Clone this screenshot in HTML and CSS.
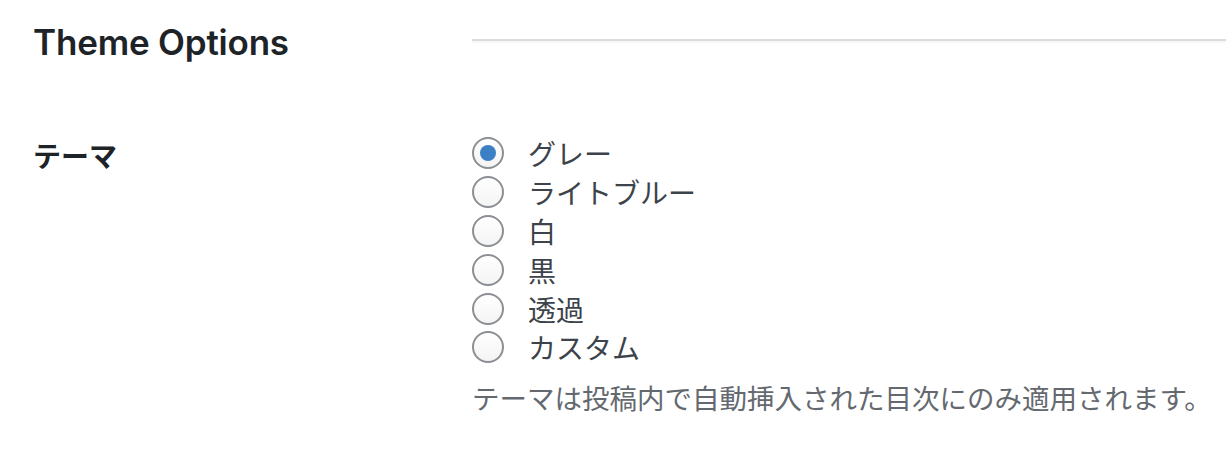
FILE: index.html
```html
<!DOCTYPE html>
<html lang="ja">
<head>
    <meta charset="UTF-8">
    <meta name="viewport" content="width=device-width, initial-scale=1.0">
    <title>Theme Options</title>
    <link rel="stylesheet" href="styles.css">
</head>
<body>
    <div class="wrap">
        <div class="section-head">
            <h2 class="title">Theme Options</h2>
            <hr class="divider">
        </div>
        <div class="form-row">
            <div class="row-label">テーマ</div>
            <div class="row-field">
                <fieldset class="choices">
                    <label class="choice"><input type="radio" name="theme" value="grey" checked><span>グレー</span></label>
                    <label class="choice"><input type="radio" name="theme" value="light-blue"><span>ライトブルー</span></label>
                    <label class="choice"><input type="radio" name="theme" value="white"><span>白</span></label>
                    <label class="choice"><input type="radio" name="theme" value="black"><span>黒</span></label>
                    <label class="choice"><input type="radio" name="theme" value="transparent"><span>透過</span></label>
                    <label class="choice"><input type="radio" name="theme" value="custom"><span>カスタム</span></label>
                </fieldset>
                <p class="description">テーマは投稿内で自動挿入された目次にのみ適用されます。</p>
            </div>
        </div>
    </div>
</body>
</html>
```

FILE: styles.css
```css
body {
    margin: 0;
    padding: 0;
    background: #fff;
    font-family: Inter, "Noto Sans CJK JP", sans-serif;
    color: #3c434a;
}
.wrap {
    padding-left: 33px;
}
.section-head {
    display: grid;
    grid-template-columns: 439px 1fr;
    align-items: start;
}
.title {
    margin: 22px 0 0;
    font-size: 35px;
    line-height: 40px;
    font-weight: 600;
    color: #1d2327;
    letter-spacing: -0.2px;
}
.divider {
    margin: 39px 0 0;
    height: 0;
    border: 0;
    border-top: 2px solid #dcdcde;
    border-bottom: 2px solid #f6f7f7;
}
.form-row {
    display: grid;
    grid-template-columns: 439px 1fr;
    margin-top: 72px;
}
.row-label {
    font-weight: 700;
    font-size: 28px;
    line-height: 40px;
    color: #1d2327;
    padding-top: 3px;
}
.choices {
    margin: 0;
    padding: 0;
    border: 0;
}
.choice {
    display: flex;
    align-items: center;
    height: 38.8px;
    font-size: 28px;
    color: #3c434a;
}
.choice input {
    appearance: none;
    -webkit-appearance: none;
    box-sizing: border-box;
    width: 32px;
    height: 32px;
    margin: 0 24px 0 0;
    border: 2px solid #8c8f94;
    border-radius: 50%;
    background: linear-gradient(#ffffff, #f4f4f4);
    display: grid;
    place-items: center;
}
.choice input:checked::before {
    content: "";
    width: 16px;
    height: 16px;
    border-radius: 50%;
    background: #3b7fc4;
}
.description {
    margin: 14px 0 0;
    font-size: 27.5px;
    line-height: 36px;
    color: #646970;
    white-space: nowrap;
}
```
